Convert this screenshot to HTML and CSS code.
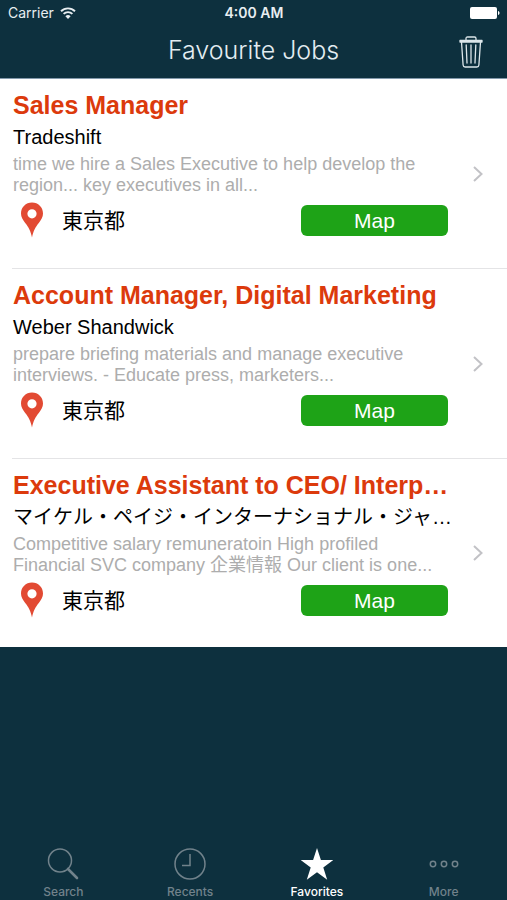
FILE: index.html
```html
<!DOCTYPE html>
<html lang="en">
<head>
<meta charset="utf-8">
<meta name="viewport" content="width=device-width, initial-scale=1">
<title>Favourite Jobs</title>
<link rel="stylesheet" href="styles.css">
</head>
<body>
<svg class="sprite" aria-hidden="true">
  <symbol id="pin" viewBox="0 0 24 36">
    <path fill="#e24a33" fill-rule="evenodd" d="M12 0.500C5.800 0.500 1 5.200 1 11.500c0 3.500 1.700 6.300 4.200 9.400C8.700 25.300 10.700 29 12 35.500c1.300-6.500 3.300-10.200 6.800-14.600C21.300 17.800 23 15 23 11.500 23 5.200 18.200 0.500 12 0.500zM12 7.200a4.600 4.600 0 1 1 0 9.200 4.600 4.600 0 0 1 0-9.200z"/>
  </symbol>
  <symbol id="chevron" viewBox="0 0 10 16">
    <path fill="none" stroke="#c2c2c6" stroke-width="2" d="M1 1l7.500 7L1 15"/>
  </symbol>
</svg>

<header class="top">
  <div class="status">
    <span class="carrier">Carrier
      <svg width="16" height="12" viewBox="0 0 16 12" aria-hidden="true">
        <g fill="none" stroke="#e8eef1" stroke-width="1.900">
          <path d="M1 4.200a10 10 0 0 1 14 0"/>
          <path d="M3.600 6.900a6.300 6.300 0 0 1 8.800 0"/>
        </g>
        <path fill="#e8eef1" d="M8 12L5.400 9.200a3.700 3.700 0 0 1 5.200 0z"/>
      </svg>
    </span>
    <span class="clock">4:00 AM</span>
    <svg class="battery" width="30" height="12" viewBox="0 0 30 12" aria-hidden="true">
      <rect width="27" height="12" rx="2" fill="#fff"/>
      <path fill="#fff" d="M28 4c2 .500 2 3.500 0 4z"/>
    </svg>
  </div>
  <div class="navbar">
    <h1>Favourite Jobs</h1>
    <button class="trash" type="button" aria-label="Delete all">
      <svg width="24" height="32" viewBox="0 0 24 32" aria-hidden="true">
        <g fill="none" stroke="#dce6ea" stroke-width="1.300" stroke-linecap="round" stroke-linejoin="round">
          <path d="M1 4.500h22v1.500H1zM7 4.500V2.500q0-1.500 1.500-1.500h7q1.500 0 1.500 1.500v2"/>
          <path d="M2.500 6l1.600 23q.200 2 2 2h11.800q1.800 0 2-2L21.500 6"/>
          <path d="M7.200 9l.800 18M12 9v18M16.800 9L16 27"/>
        </g>
      </svg>
    </button>
  </div>
</header>

<main>
  <ul class="jobs">
    <li class="job">
      <div class="info">
        <h2>Sales Manager</h2>
        <p class="company">Tradeshift</p>
        <p class="summary">time we hire a Sales Executive to help develop the<br>region... key executives in all...</p>
        <div class="place">
          <svg class="pin"><use href="#pin"/></svg>
          <span class="city">東京都</span>
          <button class="map" type="button">Map</button>
        </div>
      </div>
      <svg class="chevron"><use href="#chevron"/></svg>
    </li>
    <li class="job">
      <div class="info">
        <h2>Account Manager, Digital Marketing</h2>
        <p class="company">Weber Shandwick</p>
        <p class="summary">prepare briefing materials and manage executive<br>interviews. - Educate press, marketers...</p>
        <div class="place">
          <svg class="pin"><use href="#pin"/></svg>
          <span class="city">東京都</span>
          <button class="map" type="button">Map</button>
        </div>
      </div>
      <svg class="chevron"><use href="#chevron"/></svg>
    </li>
    <li class="job">
      <div class="info">
        <h2>Executive Assistant to CEO/ Interp…</h2>
        <p class="company">マイケル・ペイジ・インターナショナル・ジャ…</p>
        <p class="summary">Competitive salary remuneratoin High profiled<br>Financial SVC company 企業情報 Our client is one...</p>
        <div class="place">
          <svg class="pin"><use href="#pin"/></svg>
          <span class="city">東京都</span>
          <button class="map" type="button">Map</button>
        </div>
      </div>
      <svg class="chevron"><use href="#chevron"/></svg>
    </li>
  </ul>
</main>

<nav class="tabs">
  <a class="tab" href="#search">
    <svg width="32" height="32" viewBox="0 0 32 32" aria-hidden="true">
      <circle cx="13" cy="12.500" r="11.500" fill="none" stroke="currentColor" stroke-width="1.500"/>
      <path d="M21 21l9 9" stroke="currentColor" stroke-width="2.600" stroke-linecap="round"/>
    </svg>
    Search
  </a>
  <a class="tab" href="#recents">
    <svg width="32" height="32" viewBox="0 0 32 32" aria-hidden="true">
      <g fill="none" stroke="currentColor" stroke-width="1.500">
        <circle cx="16" cy="16" r="15"/>
        <path d="M16 6v11.500H8"/>
      </g>
    </svg>
    Recents
  </a>
  <a class="tab active" href="#favorites" aria-current="page">
    <svg width="32" height="32" viewBox="0 0 32 32" aria-hidden="true">
      <path fill="currentColor" d="M16 0l3.900 12H32.500L22.300 19.500l3.900 12.200L16 24.200 5.800 31.700l3.900-12.200L-.500 12h12.600z"/>
    </svg>
    Favorites
  </a>
  <a class="tab" href="#more">
    <svg width="32" height="32" viewBox="0 0 32 32" aria-hidden="true">
      <g fill="none" stroke="currentColor" stroke-width="1.500">
        <circle cx="5" cy="16" r="2.700"/>
        <circle cx="16" cy="16" r="2.700"/>
        <circle cx="27" cy="16" r="2.700"/>
      </g>
    </svg>
    More
  </a>
</nav>
</body>
</html>
```
FILE: styles.css
```css
* {
  box-sizing: border-box;
  margin: 0;
  padding: 0;
}

body {
  display: flex;
  flex-direction: column;
  min-height: 100vh;
  background: #0d303e;
  color: #000;
  font-family: "Liberation Sans", "Noto Sans CJK JP", sans-serif;
}

button {
  border: 0;
  background: none;
  font: inherit;
  cursor: pointer;
}

svg {
  display: block;
  flex: none;
}

.sprite {
  position: absolute;
  width: 0;
  height: 0;
}

.top {
  border-bottom: 1px solid #8299ab;
}

.status {
  display: grid;
  grid-template-columns: 1fr auto 1fr;
  align-items: center;
  height: 26px;
  padding: 0 7px 0 8px;
  color: #e8eef1;
  font: 14px/26px Inter, sans-serif;
}

.carrier {
  display: flex;
  align-items: center;
  gap: 6px;
}

.clock {
  font-weight: 600;
}

.battery {
  justify-self: end;
}

.navbar {
  display: grid;
  grid-template-columns: 1fr auto 1fr;
  align-items: center;
  height: 52px;
  padding: 0 24px;
}

.navbar h1 {
  grid-column: 2;
  padding-bottom: 4px;
  color: #e3edf2;
  font: 300 25px/32px Inter, sans-serif;
}

.trash {
  justify-self: end;
}

.jobs {
  list-style: none;
  background: #fff;
}

.job {
  display: flex;
  align-items: center;
  justify-content: space-between;
  padding: 0 24px 0 13px;
  background: linear-gradient(#e4e4e6, #e4e4e6) 12px 100% / 100% 1px no-repeat;
}

.job:last-child {
  background: none;
}

.info {
  flex: 0 1 435px;
  min-width: 0;
  padding: 10px 0 31px;
}

.job:last-child .info {
  padding-bottom: 29px;
}

.info h2 {
  color: #dc3a0c;
  font-size: 25px;
  line-height: 32px;
  white-space: nowrap;
}

.company {
  font-size: 20px;
  line-height: 32px;
  white-space: nowrap;
}

.summary {
  margin-top: 1px;
  color: #adadad;
  font-size: 18px;
  line-height: 21px;
}

.place {
  display: flex;
  align-items: center;
  padding: 6px 0 0 7px;
}

.pin {
  width: 24px;
  height: 36px;
}

.city {
  margin-left: 18px;
  padding-top: 2px;
  font-size: 21px;
  line-height: 30px;
}

.map {
  width: 147px;
  height: 31px;
  margin-left: auto;
  border-radius: 6px;
  background: #1ea317;
  color: #fff;
  font-size: 21px;
  line-height: 31px;
}

.chevron {
  width: 10px;
  height: 16px;
}

.tabs {
  display: grid;
  grid-template-columns: repeat(4, 1fr);
  margin-top: auto;
}

.tab {
  display: flex;
  flex-direction: column;
  align-items: center;
  gap: 4px;
  color: #71828b;
  font: 500 12px/16px Inter, sans-serif;
  text-decoration: none;
}

.tab.active {
  color: #fff;
}
```
